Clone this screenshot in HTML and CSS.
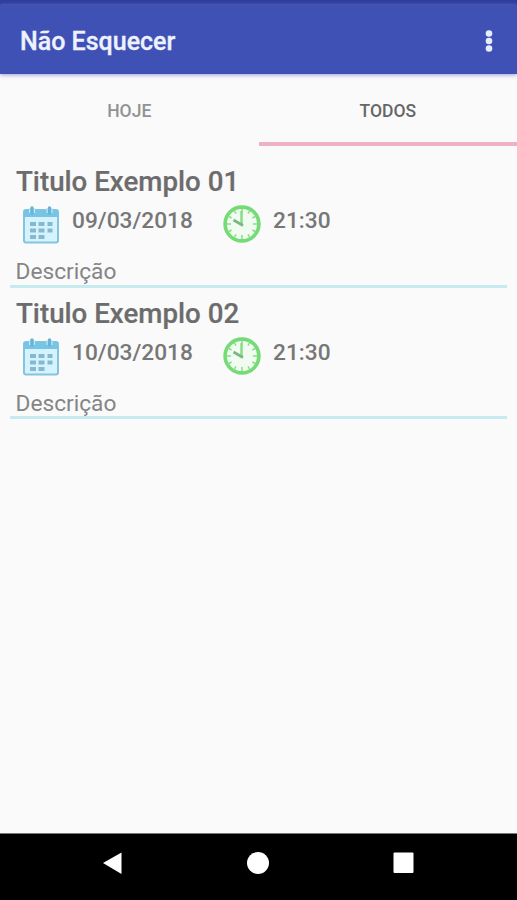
FILE: index.html
```html
<!DOCTYPE html>
<html lang="pt-BR">
<head>
<meta charset="utf-8">
<title>Não Esquecer</title>
<link rel="stylesheet" href="styles.css">
</head>
<body>
<svg width="0" height="0" class="defs">
  <symbol id="calendar" viewBox="0 0 38 40">
    <rect x="2" y="5" width="34" height="32.500" rx="2" fill="#d4f3fd" stroke="#84c4de" stroke-width="2"/>
    <path d="M2 5h34v7H2z" fill="#78c4e4"/>
    <path d="M10 3v5M27.500 3v5" stroke="#c5eaf7" stroke-width="6"/>
    <path d="M10 3v5M27.500 3v5" stroke="#69b4d6" stroke-width="3.500" stroke-linecap="round"/>
    <path d="M8 17h6v4H8zm8.500 0h6v4h-6zm9 0h5v4h-5zM8 23.500h6v4H8zm8.500 0h6v4h-6zm9 0h5v4h-5zM8 30h6v4H8zm8.500 0h6v4h-6z" fill="#86b9cf"/>
  </symbol>
  <symbol id="clock" viewBox="0 0 38 38">
    <circle cx="19" cy="19" r="16.900" fill="#effcef" stroke="#74db76" stroke-width="3.600"/>
    <path d="M19 4v4M19 30v4M4 19h4M30 19h4M11.500 6l1.500 2.600M26.500 6L25 8.600M11.500 32l1.500-2.600M26.500 32L25 29.400M6 11.500l2.600 1.500M32 11.500L29.400 13M6 26.500L8.600 25M32 26.500L29.400 25" stroke="#8bdb8c" stroke-width="1.500"/>
    <path d="M18.500 6v14" stroke="#8ad986" stroke-width="2.400"/>
    <path d="M10.500 15l9.500 5.500" stroke="#7cb783" stroke-width="2.600"/>
  </symbol>
</svg>
<div class="screen">
  <div class="status"></div>
  <header class="appbar">
    <h1>Não Esquecer</h1>
    <svg class="more" viewBox="0 0 8 24"><circle cx="4" cy="4.500" r="3.300"/><circle cx="4" cy="12" r="3.300"/><circle cx="4" cy="19.500" r="3.300"/></svg>
  </header>
  <nav class="tabs">
    <div class="tab">HOJE</div>
    <div class="tab active">TODOS</div>
  </nav>
  <main class="list">
    <article class="item">
      <h2>Titulo Exemplo 01</h2>
      <div class="meta">
        <svg class="cal"><use href="#calendar"/></svg><span class="date">09/03/2018</span>
        <svg class="clk"><use href="#clock"/></svg><span class="time">21:30</span>
      </div>
      <p>Descrição</p>
    </article>
    <article class="item">
      <h2>Titulo Exemplo 02</h2>
      <div class="meta">
        <svg class="cal"><use href="#calendar"/></svg><span class="date">10/03/2018</span>
        <svg class="clk"><use href="#clock"/></svg><span class="time">21:30</span>
      </div>
      <p>Descrição</p>
    </article>
  </main>
  <footer class="navbar">
    <svg viewBox="0 0 517 66"><path d="M103 29L121.500 18.500V40z"/><circle cx="258" cy="29" r="11"/><rect x="393.500" y="18.500" width="20" height="20.500" rx="1"/></svg>
  </footer>
</div>
</body>
</html>
```

FILE: styles.css
```css
* { box-sizing: border-box; }
body { margin: 0; font-family: Roboto, "Liberation Sans", sans-serif; background: #fafafa; }
h1, h2, p { margin: 0; white-space: nowrap; }
svg { display: block; flex: none; }
.defs { position: absolute; }
.screen { display: flex; flex-direction: column; height: 900px; overflow: hidden; }
.status { height: 5px; background: #2e3d9f; }
.appbar { display: flex; justify-content: space-between; align-items: center; height: 69px; padding: 4px 24px 0 20px; background: #3f51b5; box-shadow: 0 1px 4px #9aa0d4; }
.appbar h1 { font-size: 25px; font-weight: 500; line-height: 30px; color: #eef2ff; -webkit-text-stroke: .3px #eef2ff; }
.more { width: 8px; height: 24px; margin-top: -1px; fill: #e6edff; }
.tabs { display: flex; height: 72px; }
.tab { flex: 1; padding-top: 26px; text-align: center; font-size: 17.500px; line-height: 22px; font-weight: 500; color: #929292; }
.active { color: #666; border-bottom: 4px solid #efb2c3; }
.list { flex: 1; padding: 18px 10px 0; }
.item { height: 131.500px; }
.item h2 { padding-left: 6px; font-size: 27.700px; line-height: 35px; font-weight: 500; color: #6c6c6c; -webkit-text-stroke: .2px #6c6c6c; }
.meta { display: flex; height: 47px; padding: 6px 0 0 12px; }
.cal { width: 38px; height: 40px; }
.clk { width: 38px; height: 38px; margin-left: 30px; }
.meta span { padding-top: 2px; font-size: 22.700px; line-height: 28px; font-weight: 500; color: #777; white-space: nowrap; }
.date { width: 121px; margin-left: 12px; }
.time { margin-left: 12px; }
.item p { height: 41.500px; padding: 13px 0 0 5.500px; border-bottom: 3px solid #c6eaf0; font-size: 22.700px; line-height: 26px; color: #858585; }
.navbar { height: 67px; background: #000; border-top: 1px solid #777; }
.navbar svg { width: 517px; height: 66px; fill: #fff; }
```
